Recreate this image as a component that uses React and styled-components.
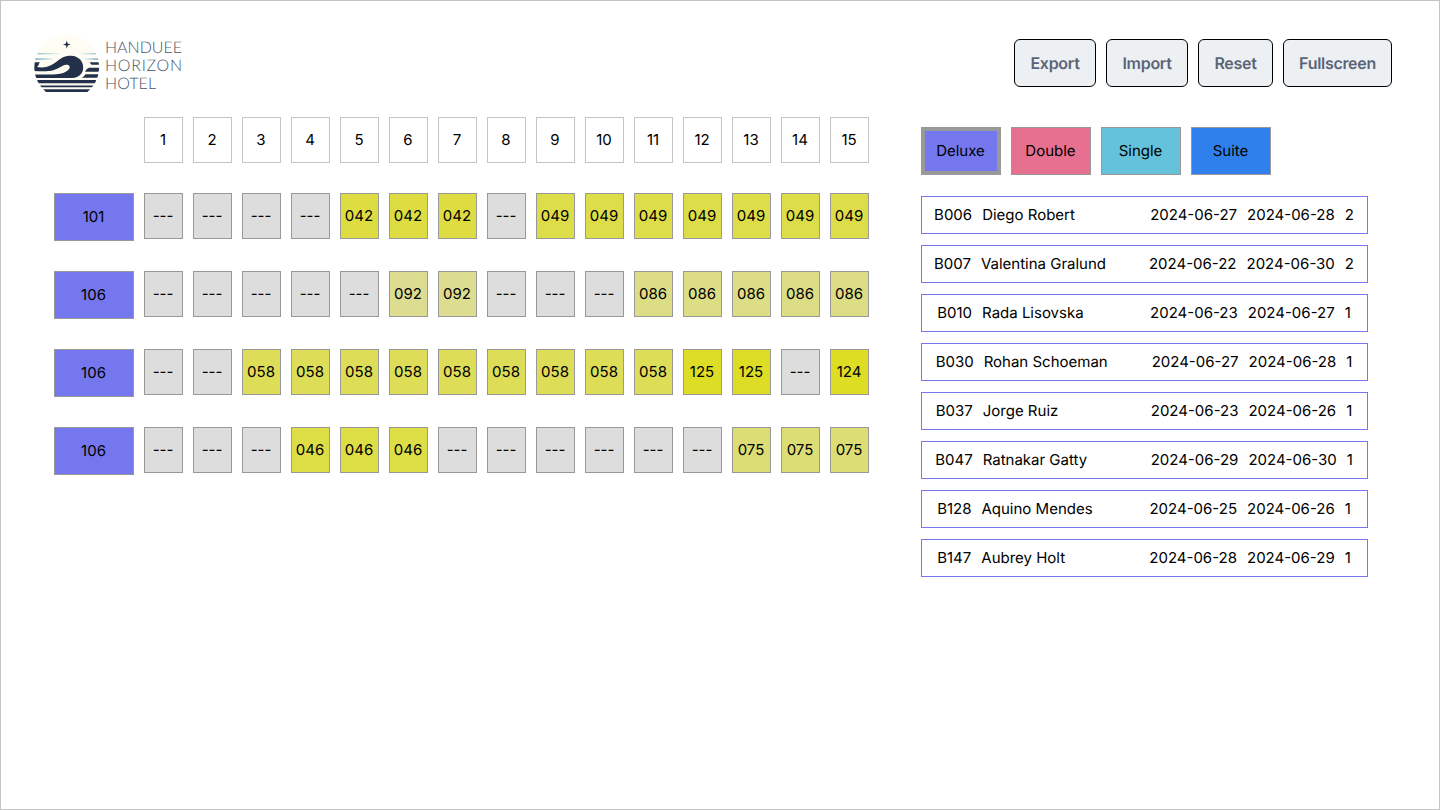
import React from "react";
import styled, { createGlobalStyle } from "styled-components";

const GlobalStyle = createGlobalStyle`
  *, *::before, *::after { box-sizing: border-box; }
  body {
    margin: 0;
    background: #fff;
    color: #000;
    font-family: Inter, "Liberation Sans", sans-serif;
    font-size: 15px;
    font-weight: 380;
    line-height: 18px;
    text-rendering: geometricPrecision;
  }
  button { font: inherit; color: inherit; margin: 0; cursor: pointer; text-rendering: inherit; }
`;

const ROOM_COLORS = { deluxe: "#7477ee", double: "#e76f8f", single: "#64c2da", suite: "#2f80ed" };

const Page = styled.div`
  height: 810px;
  border: 1px solid #c4c4c4;
  overflow: hidden;
`;

const Header = styled.header`
  display: flex;
  justify-content: space-between;
  align-items: flex-start;
  height: 116px;
  padding: 33px 47px 0 33px;
`;

const Brand = styled.svg`
  display: block;
  width: 150px;
  height: 60px;
`;

const BrandText = styled.text`
  font-family: Lato, sans-serif;
  font-weight: 300;
  font-size: 16px;
  fill: #465262;
  opacity: 0.99;
`;

const Actions = styled.nav`
  display: flex;
  gap: 10px;
  padding-top: 5px;
`;

const ActionButton = styled.button`
  width: ${(p) => p.$width}px;
  height: 48px;
  padding: 0;
  border: 1px solid #000;
  border-radius: 6px;
  background: #edf0f3;
  && { color: #5a6478; font-size: 16px; font-weight: 600; letter-spacing: -0.3px; }
`;

const Main = styled.main`
  display: flex;
  align-items: flex-start;
  gap: 52px;
  padding-left: 53px;
`;

const Planner = styled.section`
  display: flex;
  flex-direction: column;
  gap: 30px;
`;

const PlannerRow = styled.div`
  display: flex;
  align-items: flex-start;
  gap: 10px;
`;

const DayRow = styled(PlannerRow)`
  padding-left: 90px;
`;

const Cell = styled.div`
  display: flex;
  align-items: center;
  justify-content: center;
  width: 39px;
  height: 46px;
  padding-right: 1px;
  border: 1px solid #999;
  background: ${(p) => p.$color || "#ddd"};
`;

const DayCell = styled(Cell)`
  border-color: #c4c4c4;
  background: #fff;
`;

const RoomTag = styled.button`
  width: 80px;
  height: 48px;
  padding: 0 1px 0 0;
  border: ${(p) => (p.$selected ? 4 : 1)}px solid #999;
  background: ${(p) => ROOM_COLORS[p.$type]};
`;

const Sidebar = styled.aside`
  width: 447px;
  padding-top: 10px;
`;

const TypeTabs = styled.div`
  display: flex;
  gap: 10px;
  margin-bottom: 21px;
`;

const BookingList = styled.div`
  display: flex;
  flex-direction: column;
  gap: 11px;
`;

const Booking = styled.div`
  display: flex;
  align-items: center;
  justify-content: center;
  gap: 10px;
  height: 38px;
  padding-right: 1px;
  border: 1px solid #7477ee;
  white-space: nowrap;
`;

const GuestName = styled.span`
  width: 158px;
`;

const CELL_COLORS = {
  "042": "#dddd42", "046": "#dddd46", "049": "#dddd49", "058": "#dddd58",
  "075": "#dddd75", "086": "#dddd86", "092": "#dddd92", "124": "#dddd24", "125": "#dddd25",
};

const ROOMS = [
  ["101", "--- --- --- --- 042 042 042 --- 049 049 049 049 049 049 049"],
  ["106", "--- --- --- --- --- 092 092 --- --- --- 086 086 086 086 086"],
  ["106", "--- --- 058 058 058 058 058 058 058 058 058 125 125 --- 124"],
  ["106", "--- --- --- 046 046 046 --- --- --- --- --- --- 075 075 075"],
];

const BOOKINGS = [
  ["B006", "Diego Robert", "2024-06-27", "2024-06-28", "2"],
  ["B007", "Valentina Gralund", "2024-06-22", "2024-06-30", "2"],
  ["B010", "Rada Lisovska", "2024-06-23", "2024-06-27", "1"],
  ["B030", "Rohan Schoeman", "2024-06-27", "2024-06-28", "1"],
  ["B037", "Jorge Ruiz", "2024-06-23", "2024-06-26", "1"],
  ["B047", "Ratnakar Gatty", "2024-06-29", "2024-06-30", "1"],
  ["B128", "Aquino Mendes", "2024-06-25", "2024-06-26", "1"],
  ["B147", "Aubrey Holt", "2024-06-28", "2024-06-29", "1"],
];

const ACTIONS = [["Export", 82], ["Import", 82], ["Reset", 75], ["Fullscreen", 109]];

function Logo() {
  return (
    <Brand viewBox="0 0 150 60" role="img" aria-label="Handuee Horizon Hotel">
      <defs>
        <clipPath id="sun"><path d="M12 58A32.4 32.4 0 1 1 53.4 58Z" /></clipPath>
        <linearGradient id="haze">
          <stop offset="0" stopColor="#78afc6" />
          <stop offset="1" stopColor="#e8f1ee" />
        </linearGradient>
        <linearGradient id="hazeRight">
          <stop offset="0" stopColor="#e8f1ee" />
          <stop offset="1" stopColor="#78afc6" />
        </linearGradient>
      </defs>
      <g clipPath="url(#sun)">
        <rect width="66" height="60" fill="#fffdf3" />
        <rect x="2" y="19.2" width="23" height="1.1" fill="url(#haze)" />
        <rect x="0" y="24.2" width="19" height="1.7" fill="url(#haze)" />
        <rect x="47" y="19.2" width="17" height="1.1" fill="url(#hazeRight)" />
        <rect x="51" y="24.2" width="14" height="1.7" fill="url(#hazeRight)" />
        <g fill="#22304a">
          <path d="M0 28.3H6Q4.5 29.8 4.6 31.3L3 33C12 34.5 18 31.5 24 26.5C29 22.5 33 21.6 37 21.7C44.5 22 49.2 27 49.2 33.3C49.2 40 44.5 44 38 44H0V40.6H19C27 40.4 33 38.6 35.4 34.6C36.4 32 34.6 30.5 32 30.8C28 31.4 25.5 34.3 20 36C14 37.8 7 37.3 0 37Z" />
          <path d="M66 28.3H55.5L57.5 30.8H66ZM66 33.7H55Q52.2 34.8 51 37.8H66ZM66 40.3H51.5Q50.2 42.5 47.8 43.8H66Z" />
          <path d="M0 46H66V49.2H0ZM0 51.4H66V53.2H0ZM0 55.2H66V58H0Z" />
        </g>
      </g>
      <path d="M32.8 6.6L33.7 9.6L36.6 10.5L33.7 11.4L32.8 14.4L31.9 11.4L29 10.5L31.9 9.6Z" fill="#22304a" />
      <BrandText x="71" y="19.2" textLength="77">HANDUEE</BrandText>
      <BrandText x="71" y="37" textLength="77">HORIZON</BrandText>
      <BrandText x="71" y="54.8" textLength="51">HOTEL</BrandText>
    </Brand>
  );
}

export default function App() {
  return (
    <Page>
      <GlobalStyle />
      <Header>
        <Logo />
        <Actions>
          {ACTIONS.map(([label, width]) => (
            <ActionButton key={label} $width={width}>{label}</ActionButton>
          ))}
        </Actions>
      </Header>
      <Main>
        <Planner>
          <DayRow>
            {Array.from({ length: 15 }, (_, i) => <DayCell key={i}>{i + 1}</DayCell>)}
          </DayRow>
          {ROOMS.map(([room, nights], r) => (
            <PlannerRow key={r}>
              <RoomTag $type="deluxe">{room}</RoomTag>
              {nights.split(" ").map((id, i) => <Cell key={i} $color={CELL_COLORS[id]}>{id}</Cell>)}
            </PlannerRow>
          ))}
        </Planner>
        <Sidebar>
          <TypeTabs>
            {["Deluxe", "Double", "Single", "Suite"].map((name) => (
              <RoomTag key={name} $type={name.toLowerCase()} $selected={name === "Deluxe"}>{name}</RoomTag>
            ))}
          </TypeTabs>
          <BookingList>
            {BOOKINGS.map(([id, guest, from, to, guests]) => (
              <Booking key={id}>
                <span>{id}</span>
                <GuestName>{guest}</GuestName>
                <span>{from}</span>
                <span>{to}</span>
                <span>{guests}</span>
              </Booking>
            ))}
          </BookingList>
        </Sidebar>
      </Main>
    </Page>
  );
}
